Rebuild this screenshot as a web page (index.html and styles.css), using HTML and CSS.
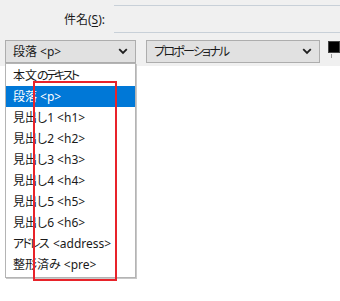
FILE: index.html
```html
<!DOCTYPE html>
<html lang="ja">
<head>
<meta charset="utf-8">
<link rel="stylesheet" href="styles.css">
</head>
<body>
<div class="page">
  <div class="toolbar">
    <div class="subject-row">
      <label class="subject-label">件名(<u>S</u>):</label>
      <div class="subject-field"></div>
    </div>
    <div class="select-row">
      <div class="combo combo-format">
        <span class="combo-text">段落 &lt;p&gt;</span>
        <svg class="chev" width="10" height="7" viewBox="0 0 10 7"><path d="M1.2 1.2 L5 5 L8.8 1.2" fill="none" stroke="#1e1e1e" stroke-width="1.8"/></svg>
      </div>
      <div class="combo combo-font">
        <span class="combo-text kana">プロポーショナル</span>
        <svg class="chev" width="10" height="7" viewBox="0 0 10 7"><path d="M1.2 1.2 L5 5 L8.8 1.2" fill="none" stroke="#1e1e1e" stroke-width="1.8"/></svg>
      </div>
      <div class="swatch-wrap">
        <div class="swatch"></div>
        <div class="swatch-tick"></div>
      </div>
    </div>
  </div>
  <div class="editor"></div>

  <ul class="dropdown">
    <li class="item">本文<span class="kana-tight">のテキスト</span></li>
    <li class="item selected">段落 &lt;p&gt;</li>
    <li class="item">見出し1 &lt;h1&gt;</li>
    <li class="item">見出し2 &lt;h2&gt;</li>
    <li class="item">見出し3 &lt;h3&gt;</li>
    <li class="item">見出し4 &lt;h4&gt;</li>
    <li class="item">見出し5 &lt;h5&gt;</li>
    <li class="item">見出し6 &lt;h6&gt;</li>
    <li class="item"><span class="kana kana-gap">アドレス</span> &lt;address&gt;</li>
    <li class="item">整形済み &lt;pre&gt;</li>
  </ul>
  <div class="annotation"></div>
</div>
</body>
</html>
```

FILE: styles.css
```css
html, body {
  margin: 0;
  padding: 0;
  background: #ffffff;
}
body {
  font-family: "Noto Sans", "Noto Sans CJK JP", sans-serif;
  font-size: 12px;
  color: #1a1a1a;
  font-feature-settings: "palt";
}
.page {
  position: relative;
  width: 340px;
  height: 301px;
  overflow: hidden;
}
.toolbar {
  background: #f0f0f0;
  height: 66px;
  padding-top: 5px;
  box-sizing: border-box;
}
.subject-row {
  display: flex;
  height: 28px;
}
.subject-label {
  width: 50px;
  padding-left: 64px;
  line-height: 30px;
  font-size: 12px;
  color: #1a1a1a;
  white-space: nowrap;
}
.subject-label u {
  text-underline-offset: 2px;
}
.subject-field {
  flex: 1;
  border-top: 1px solid #c8d0d8;
  border-bottom: 1px solid #c8d0d8;
}
.select-row {
  display: flex;
  align-items: flex-start;
  margin-top: 7px;
  padding-left: 5px;
}
.combo {
  box-sizing: border-box;
  height: 23px;
  background: #e1e1e1;
  border: 1px solid #adadad;
  display: flex;
  align-items: center;
  justify-content: space-between;
  padding: 0 7px 0 7px;
}
.combo-text {
  line-height: 21px;
  white-space: nowrap;
}
.kana {
  letter-spacing: -1.8px;
}
.kana-gap {
  margin-right: 2px;
}
.kana-tight {
  letter-spacing: -2.6px;
  margin-right: 2px;
}
.combo-format {
  width: 132px;
}
.combo-font {
  width: 175px;
  margin-left: 10px;
}
.swatch-wrap {
  margin-left: 8px;
  padding-top: 1px;
}
.swatch {
  width: 12px;
  height: 12px;
  background: #000000;
  border: 1px solid #444;
  box-sizing: border-box;
}
.swatch-tick {
  width: 1px;
  height: 4px;
  margin: 1px 0 0 3px;
  background: #9a9a9a;
}
.editor {
  height: 235px;
  background: #ffffff;
}
.dropdown {
  position: absolute;
  left: 5px;
  top: 63px;
  width: 131px;
  height: 215px;
  box-sizing: border-box;
  margin: 0;
  padding: 1px 0 2px 0;
  list-style: none;
  background: #ffffff;
  border: 1px solid #b4b4b4;
  box-shadow: 1px 1px 0 #c8c8c8;
}
.item {
  height: 21px;
  line-height: 21px;
  padding-left: 7px;
  white-space: nowrap;
  color: #1a1a1a;
}
.item.selected {
  background: #0078d7;
  color: #ffffff;
}
.annotation {
  position: absolute;
  left: 33px;
  top: 81px;
  width: 84px;
  height: 200px;
  box-sizing: border-box;
  border: 2px solid #e8232a;
}
```
